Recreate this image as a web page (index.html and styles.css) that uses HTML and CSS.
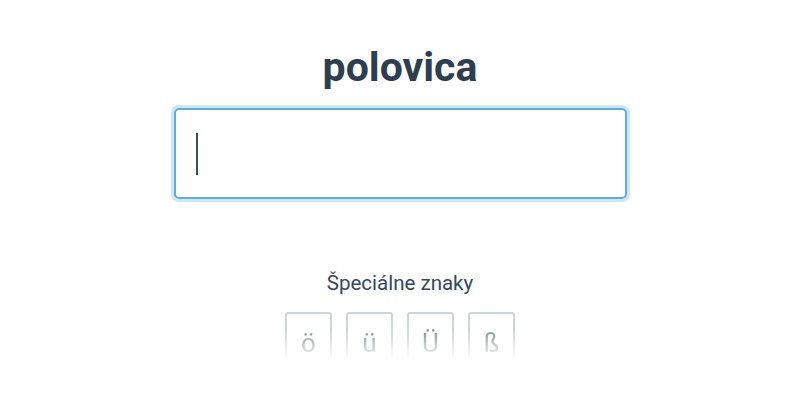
FILE: index.html
```html
<!DOCTYPE html>
<html>
<head>
    <title>polovica</title>
    <link rel="stylesheet" href="styles.css">
</head>
<body>
    <div class="page">
        <h1 class="word">polovica</h1>

        <div class="answer">
            <span class="caret"></span>
        </div>

        <div class="special">
            <p class="special-title">Špeciálne znaky</p>
            <div class="keys">
                <button class="key">ö</button>
                <button class="key">ü</button>
                <button class="key">Ü</button>
                <button class="key">ß</button>
            </div>
        </div>
    </div>
</body>
</html>
```

FILE: styles.css
```css
body {
    margin: 0;
    background-color: #fff;
    font-family: Roboto, "Liberation Sans", sans-serif;
    color: #2c3e50;
}
.page {
    display: flex;
    flex-direction: column;
    align-items: center;
    padding-top: 42px;
}
.word {
    margin: 0;
    font-size: 41px;
    font-weight: bold;
    line-height: 50px;
    color: #2c3e50;
}
.answer {
    box-sizing: border-box;
    width: 453px;
    height: 91px;
    margin-top: 16px;
    padding: 22px 20px;
    border: 2px solid #5dade2;
    border-radius: 5px;
    box-shadow: 0 0 0 3px rgba(93, 173, 226, 0.3);
    display: flex;
    align-items: center;
}
.caret {
    display: block;
    width: 2px;
    height: 42px;
    background-color: #3d4b5c;
}
.special {
    margin-top: 70px;
    display: flex;
    flex-direction: column;
    align-items: center;
}
.special-title {
    margin: 0;
    font-size: 20.5px;
    line-height: 28px;
    color: #34495e;
}
.keys {
    display: flex;
    gap: 14px;
    margin-top: 15px;
    height: 48px;
    overflow: hidden;
    -webkit-mask-image: linear-gradient(to bottom, #000 40%, transparent 100%);
    mask-image: linear-gradient(to bottom, #000 40%, transparent 100%);
}
.key {
    box-sizing: border-box;
    width: 47px;
    height: 60px;
    padding: 14px 0 0;
    background: #fff;
    border: 2px solid #cfd4d8;
    border-radius: 3px;
    font-family: Roboto, "Liberation Sans", sans-serif;
    font-size: 26px;
    color: #8b98a5;
    display: flex;
    justify-content: center;
    align-items: flex-start;
}
```
